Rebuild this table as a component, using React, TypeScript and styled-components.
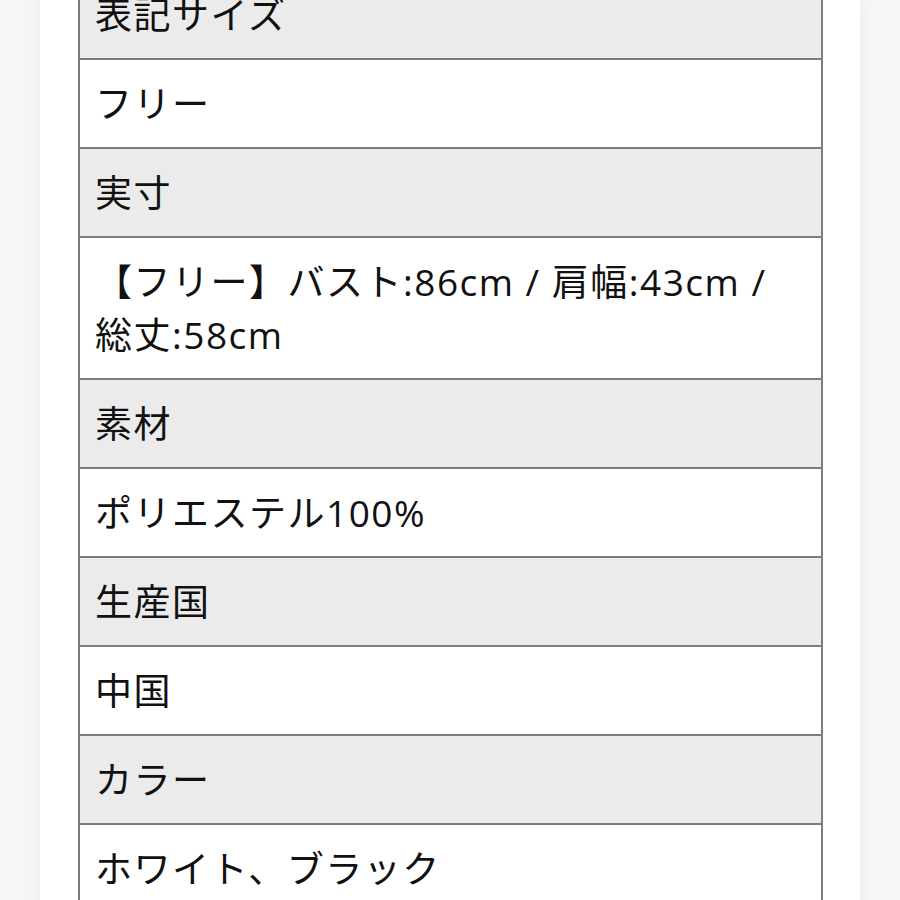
import styled, { createGlobalStyle } from "styled-components";

const GlobalStyle = createGlobalStyle`
	html, body {
		margin: 0;
		padding: 0;
		background: #f6f6f6;
	}
	body {
		font-family: "Open Sans", "Noto Sans CJK JP", sans-serif;
		color: #111;
		overflow: hidden;
	}
`;

type SpecRow = {
	label: string;
	value: string;
};

const rows: SpecRow[] = [
	{ label: "表記サイズ", value: "フリー" },
	{ label: "実寸", value: "【フリー】バスト:86cm / 肩幅:43cm / 総丈:58cm" },
	{ label: "素材", value: "ポリエステル100%" },
	{ label: "生産国", value: "中国" },
	{ label: "カラー", value: "ホワイト、ブラック" },
];

export default function App() {
	return (
		<>
			<GlobalStyle />
			<Page>
				<SpecTable>
					{rows.map((row) => (
						<tbody key={row.label}>
							<tr>
								<Cell $head>{row.label}</Cell>
							</tr>
							<tr>
								<Cell>{row.value}</Cell>
							</tr>
						</tbody>
					))}
				</SpecTable>
			</Page>
		</>
	);
}

const Page = styled.div`
	margin: 0 40px;
	min-height: 900px;
	background: #fff;
	box-shadow: 0 0 16px rgba(0, 0, 0, 0.05);
	padding: 0 37px 0 38px;
	overflow: hidden;
`;

const SpecTable = styled.table`
	width: 100%;
	margin-top: -31px;
	border-collapse: collapse;
	border: 2px solid #7d7d7d;
`;

const Cell = styled.td<{ $head?: boolean }>`
	padding: 17px 16px 17px 15px;
	border: 2px solid #7d7d7d;
	background: ${(p) => (p.$head ? "#ebebeb" : "#fff")};
	font-size: 37px;
	line-height: 53px;
	font-weight: 400;
	letter-spacing: 1.5px;
`;
